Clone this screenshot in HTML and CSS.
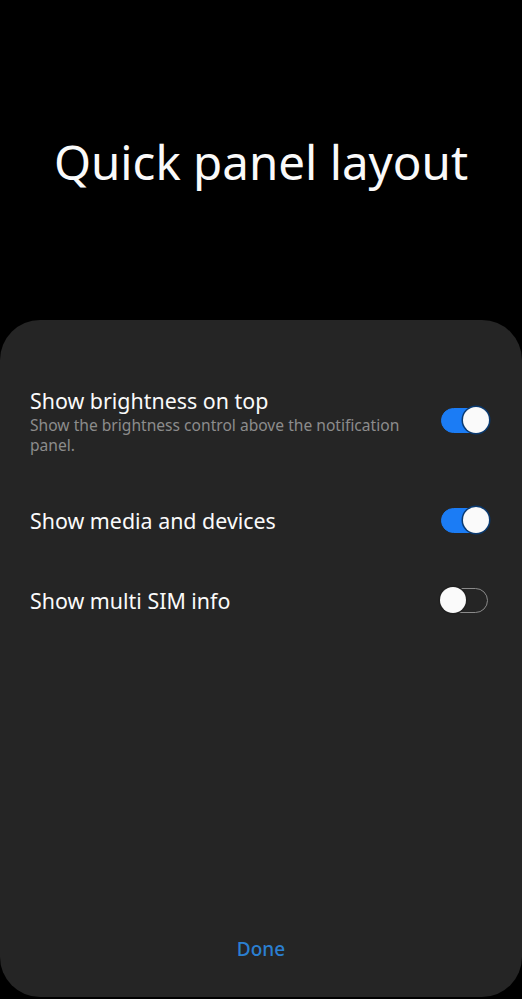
FILE: index.html
```html
<!DOCTYPE html>
<html lang="en">
  <head>
    <meta charset="UTF-8" />
    <meta name="viewport" content="width=device-width, initial-scale=1.0" />
    <title>Quick panel layout</title>
    <link rel="stylesheet" href="styles.css">
  </head>
  <body>
    <header class="top">
      <h1 class="page-title">Quick panel layout</h1>
    </header>
    <main class="sheet">
      <div class="row row-tall">
        <div class="row-text">
          <div class="row-title">Show brightness on top</div>
          <div class="row-sub">Show the brightness control above the notification panel.</div>
        </div>
        <span class="switch on"><span class="knob"></span></span>
      </div>
      <div class="row">
        <div class="row-text">
          <div class="row-title">Show media and devices</div>
        </div>
        <span class="switch on"><span class="knob"></span></span>
      </div>
      <div class="row">
        <div class="row-text">
          <div class="row-title">Show multi SIM info</div>
        </div>
        <span class="switch"><span class="knob"></span></span>
      </div>
      <div class="footer">
        <button class="done">Done</button>
      </div>
    </main>
  </body>
</html>
```
FILE: styles.css
```css
body {
  margin: 0;
  background: #000;
  font-family: "Noto Sans", "Open Sans", sans-serif;
  color: #fafafa;
}

.top {
  height: 320px;
  display: flex;
  justify-content: center;
  padding-top: 127px;
  box-sizing: border-box;
}

.page-title {
  margin: 0;
  font-size: 47.5px;
  font-weight: 400;
  line-height: 70px;
  height: 70px;
}

.sheet {
  height: 677px;
  background: #252525;
  border-radius: 40px;
  padding: 40px 34px 0 30px;
  box-sizing: border-box;
  display: flex;
  flex-direction: column;
}

.row {
  display: flex;
  align-items: center;
  justify-content: space-between;
  height: 80px;
}

.row-tall {
  height: 120px;
}

.row-text {
  max-width: 385px;
}

.row-title {
  font-size: 21.4px;
  line-height: 29px;
}

.row-sub {
  font-size: 15.6px;
  line-height: 20px;
  color: #8c8c8c;
}

.switch {
  position: relative;
  width: 47px;
  height: 25px;
  border-radius: 13px;
  border: 1.5px solid #8a8a8a;
  box-sizing: border-box;
  flex-shrink: 0;
}

.switch.on {
  background: #1b7cf5;
  border-color: #1b7cf5;
}

.knob {
  position: absolute;
  top: -2px;
  left: -2px;
  width: 26px;
  height: 26px;
  border-radius: 50%;
  background: #fafafa;
  box-shadow: 0 0 0 1.5px #202020;
}

.switch.on .knob {
  left: auto;
  right: -2px;
  box-shadow: 0 0 0 1.5px #0a3a70;
}

.footer {
  margin-top: auto;
  display: flex;
  justify-content: center;
  padding: 0 0 33px 4px;
}

.done {
  background: none;
  border: none;
  font-family: inherit;
  font-size: 19px;
  font-weight: 500;
  line-height: 30px;
  color: #2b7fd1;
  padding: 0;
}
```
